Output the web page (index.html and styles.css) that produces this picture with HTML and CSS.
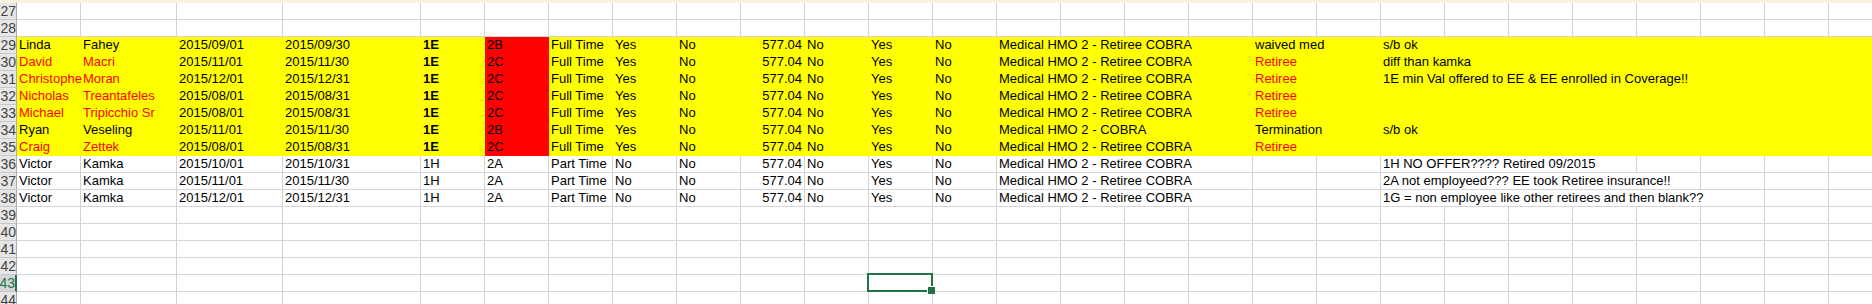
FILE: index.html
```html
<!DOCTYPE html>
<html lang="en">
<head>
<meta charset="utf-8">
<title>Sheet</title>
<link rel="stylesheet" href="styles.css">
</head>
<body>
<div class="sheet">
  <div class="strip"></div>

  <div class="row"><div class="hdr">27</div><div></div><div></div><div></div><div></div><div></div><div></div><div></div><div></div><div></div><div></div><div></div><div></div><div></div><div></div><div></div><div></div><div></div><div></div><div></div><div></div><div></div><div></div><div></div><div></div><div></div><div></div><div></div></div>
  <div class="row"><div class="hdr">28</div><div></div><div></div><div></div><div></div><div></div><div></div><div></div><div></div><div></div><div></div><div></div><div></div><div></div><div></div><div></div><div></div><div></div><div></div><div></div><div></div><div></div><div></div><div></div><div></div><div></div><div></div><div></div></div>

  <div class="row hl"><div class="hdr">29</div><div>Linda</div><div>Fahey</div><div>2015/09/01</div><div>2015/09/30</div><div class="b">1E</div><div class="fr">2B</div><div>Full Time</div><div>Yes</div><div>No</div><div class="num">577.04</div><div>No</div><div>Yes</div><div>No</div><div class="s4">Medical HMO 2 - Retiree COBRA</div><div>waived med</div><div></div><div>s/b ok</div><div></div><div></div><div></div><div></div><div></div><div></div><div></div></div>
  <div class="row hl"><div class="hdr">30</div><div class="red">David</div><div class="red">Macri</div><div>2015/11/01</div><div>2015/11/30</div><div class="b">1E</div><div class="fr">2C</div><div>Full Time</div><div>Yes</div><div>No</div><div class="num">577.04</div><div>No</div><div>Yes</div><div>No</div><div class="s4">Medical HMO 2 - Retiree COBRA</div><div class="red">Retiree</div><div></div><div>diff than kamka</div><div></div><div></div><div></div><div></div><div></div><div></div><div></div></div>
  <div class="row hl"><div class="hdr">31</div><div class="red">Christophe</div><div class="red">Moran</div><div>2015/12/01</div><div>2015/12/31</div><div class="b">1E</div><div class="fr">2C</div><div>Full Time</div><div>Yes</div><div>No</div><div class="num">577.04</div><div>No</div><div>Yes</div><div>No</div><div class="s4">Medical HMO 2 - Retiree COBRA</div><div class="red">Retiree</div><div></div><div>1E min Val offered to EE &amp; EE enrolled in Coverage!!</div><div></div><div></div><div></div><div></div><div></div><div></div><div></div></div>
  <div class="row hl"><div class="hdr">32</div><div class="red">Nicholas</div><div class="red">Treantafeles</div><div>2015/08/01</div><div>2015/08/31</div><div class="b">1E</div><div class="fr">2C</div><div>Full Time</div><div>Yes</div><div>No</div><div class="num">577.04</div><div>No</div><div>Yes</div><div>No</div><div class="s4">Medical HMO 2 - Retiree COBRA</div><div class="red">Retiree</div><div></div><div></div><div></div><div></div><div></div><div></div><div></div><div></div><div></div></div>
  <div class="row hl"><div class="hdr">33</div><div class="red">Michael</div><div class="red">Tripicchio Sr</div><div>2015/08/01</div><div>2015/08/31</div><div class="b">1E</div><div class="fr">2C</div><div>Full Time</div><div>Yes</div><div>No</div><div class="num">577.04</div><div>No</div><div>Yes</div><div>No</div><div class="s4">Medical HMO 2 - Retiree COBRA</div><div class="red">Retiree</div><div></div><div></div><div></div><div></div><div></div><div></div><div></div><div></div><div></div></div>
  <div class="row hl"><div class="hdr">34</div><div>Ryan</div><div>Veseling</div><div>2015/11/01</div><div>2015/11/30</div><div class="b">1E</div><div class="fr">2B</div><div>Full Time</div><div>Yes</div><div>No</div><div class="num">577.04</div><div>No</div><div>Yes</div><div>No</div><div class="s4">Medical HMO 2 - COBRA</div><div>Termination</div><div></div><div>s/b ok</div><div></div><div></div><div></div><div></div><div></div><div></div><div></div></div>
  <div class="row hl"><div class="hdr">35</div><div class="red">Craig</div><div class="red">Zettek</div><div>2015/08/01</div><div>2015/08/31</div><div class="b">1E</div><div class="fr">2C</div><div>Full Time</div><div>Yes</div><div>No</div><div class="num">577.04</div><div>No</div><div>Yes</div><div>No</div><div class="s4">Medical HMO 2 - Retiree COBRA</div><div class="red">Retiree</div><div></div><div></div><div></div><div></div><div></div><div></div><div></div><div></div><div></div></div>

  <div class="row"><div class="hdr">36</div><div>Victor</div><div>Kamka</div><div>2015/10/01</div><div>2015/10/31</div><div>1H</div><div>2A</div><div>Part Time</div><div>No</div><div>No</div><div class="num">577.04</div><div>No</div><div>Yes</div><div>No</div><div class="s4">Medical HMO 2 - Retiree COBRA</div><div></div><div></div><div class="s4">1H NO OFFER???? Retired 09/2015</div><div></div><div></div><div></div><div></div></div>
  <div class="row"><div class="hdr">37</div><div>Victor</div><div>Kamka</div><div>2015/11/01</div><div>2015/11/30</div><div>1H</div><div>2A</div><div>Part Time</div><div>No</div><div>No</div><div class="num">577.04</div><div>No</div><div>Yes</div><div>No</div><div class="s4">Medical HMO 2 - Retiree COBRA</div><div></div><div></div><div class="s5">2A not employeed??? EE took Retiree insurance!!</div><div></div><div></div><div></div></div>
  <div class="row"><div class="hdr">38</div><div>Victor</div><div>Kamka</div><div>2015/12/01</div><div>2015/12/31</div><div>1H</div><div>2A</div><div>Part Time</div><div>No</div><div>No</div><div class="num">577.04</div><div>No</div><div>Yes</div><div>No</div><div class="s4">Medical HMO 2 - Retiree COBRA</div><div></div><div></div><div class="s6">1G = non employee like other retirees and then blank??</div><div></div><div></div></div>

  <div class="row"><div class="hdr">39</div><div></div><div></div><div></div><div></div><div></div><div></div><div></div><div></div><div></div><div></div><div></div><div></div><div></div><div></div><div></div><div></div><div></div><div></div><div></div><div></div><div></div><div></div><div></div><div></div><div></div><div></div><div></div></div>
  <div class="row"><div class="hdr">40</div><div></div><div></div><div></div><div></div><div></div><div></div><div></div><div></div><div></div><div></div><div></div><div></div><div></div><div></div><div></div><div></div><div></div><div></div><div></div><div></div><div></div><div></div><div></div><div></div><div></div><div></div><div></div></div>
  <div class="row"><div class="hdr">41</div><div></div><div></div><div></div><div></div><div></div><div></div><div></div><div></div><div></div><div></div><div></div><div></div><div></div><div></div><div></div><div></div><div></div><div></div><div></div><div></div><div></div><div></div><div></div><div></div><div></div><div></div><div></div></div>
  <div class="row"><div class="hdr">42</div><div></div><div></div><div></div><div></div><div></div><div></div><div></div><div></div><div></div><div></div><div></div><div></div><div></div><div></div><div></div><div></div><div></div><div></div><div></div><div></div><div></div><div></div><div></div><div></div><div></div><div></div><div></div></div>
  <div class="row"><div class="hdr cur">43</div><div></div><div></div><div></div><div></div><div></div><div></div><div></div><div></div><div></div><div></div><div></div><div class="sel"></div><div></div><div></div><div></div><div></div><div></div><div></div><div></div><div></div><div></div><div></div><div></div><div></div><div></div><div></div><div></div></div>
  <div class="row"><div class="hdr">44</div><div></div><div></div><div></div><div></div><div></div><div></div><div></div><div></div><div></div><div></div><div></div><div></div><div></div><div></div><div></div><div></div><div></div><div></div><div></div><div></div><div></div><div></div><div></div><div></div><div></div><div></div><div></div></div>
</div>
</body>
</html>
```

FILE: styles.css
```css
* {
  box-sizing: border-box;
}

html,
body {
  margin: 0;
  padding: 0;
  background: #ffffff;
  overflow: hidden;
}

body {
  width: 1872px;
  height: 304px;
  font-family: "Liberation Sans", Arial, sans-serif;
  font-size: 13px;
  color: #000000;
}

.sheet {
  width: 1872px;
  overflow: hidden;
}

.strip {
  height: 3px;
  background: #fdf0da;
}

.row {
  display: grid;
  grid-template-columns: 17px 64px 96px 106px 138px repeat(23, 64px);
  height: 17px;
  background: #ffffff;
}

.row > div {
  min-width: 0;
  height: 17px;
  padding: 0 2px;
  border-right: 1px solid #d4d4d4;
  border-bottom: 1px solid #d4d4d4;
  line-height: 16px;
  white-space: nowrap;
}

.row.hl {
  background: #ffff00;
}

.hl > div {
  border-color: transparent;
}

.row > .hdr {
  display: flex;
  justify-content: flex-end;
  overflow: hidden;
  padding: 0;
  font-size: 14px;
  background: #e6e6e6;
  border-right: 1px solid #ababab;
  border-bottom: 1px solid #c8c8c8;
  color: #444444;
}

.row > .hdr.cur {
  background: #d6d6d6;
  color: #217346;
  border-right: 2px solid #217346;
}

.b {
  font-weight: bold;
}

.red {
  color: #ff0000;
}

.row > .fr {
  background: #ff0000;
}

.num {
  text-align: right;
}

.s4 {
  grid-column: span 4;
}

.s5 {
  grid-column: span 5;
}

.s6 {
  grid-column: span 6;
}

.sel {
  position: relative;
}

.sel::before {
  content: "";
  position: absolute;
  left: -2px;
  top: -2px;
  right: -1px;
  bottom: -1px;
  border: 2px solid #217346;
}

.sel::after {
  content: "";
  position: absolute;
  right: -3px;
  bottom: -3px;
  width: 7px;
  height: 7px;
  background: #217346;
  border-left: 1px solid #ffffff;
  border-top: 1px solid #ffffff;
}
```
